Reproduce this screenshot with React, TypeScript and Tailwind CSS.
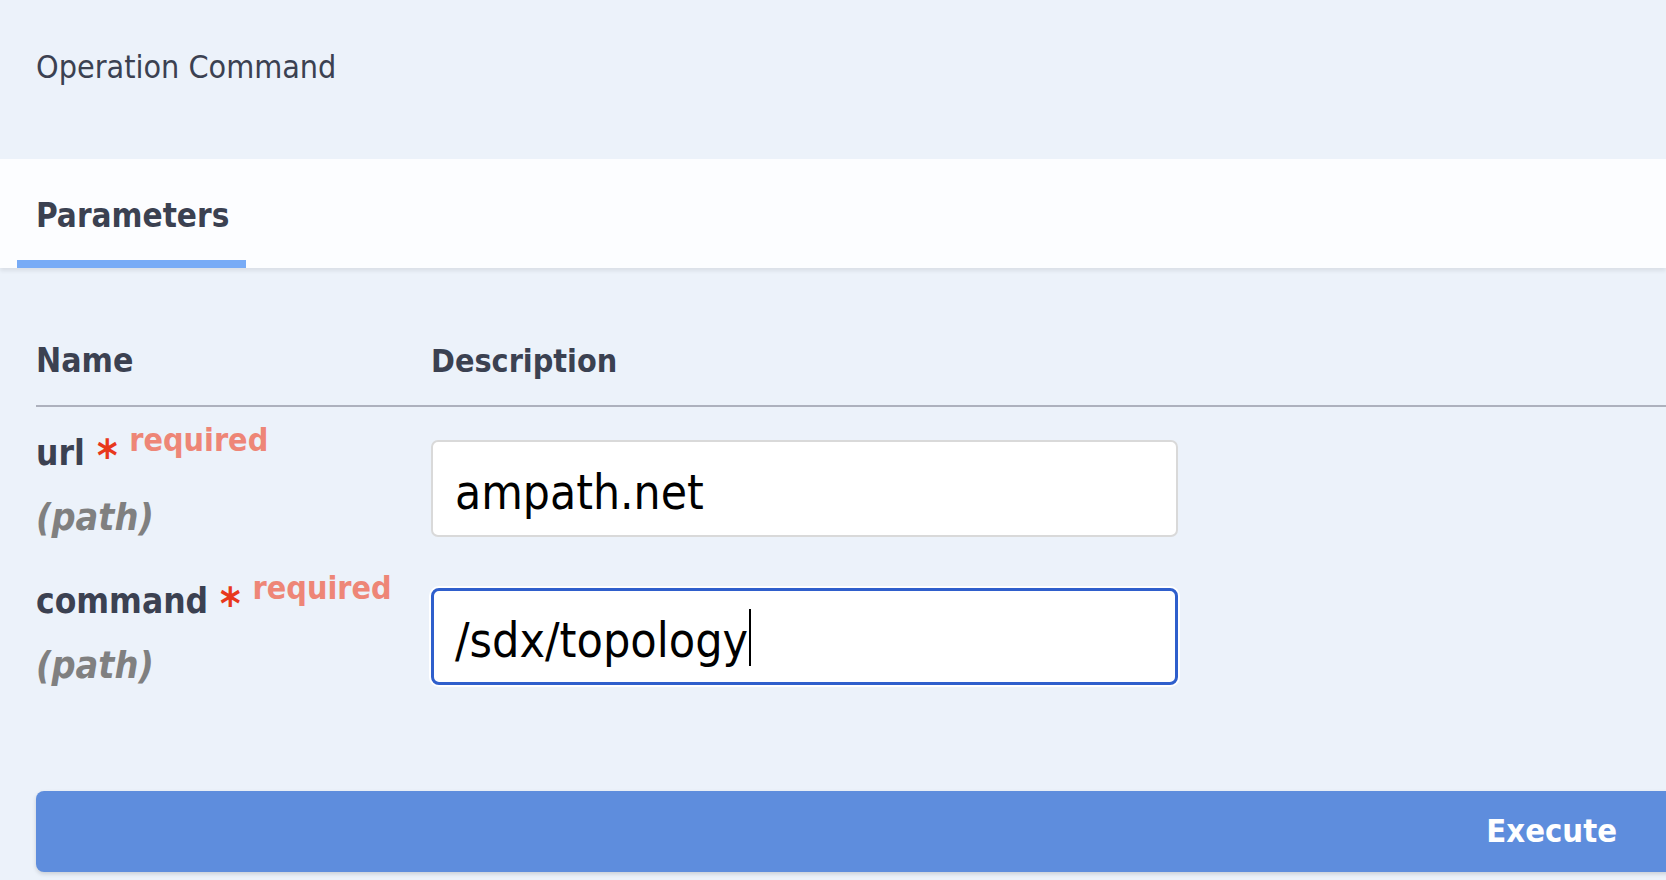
const FONT = "[font-family:'DejaVu_Sans_Condensed','DejaVu_Sans',sans-serif]";

interface ParamRowProps {
  name: string;
  location: string;
  children: React.ReactNode;
}

function ParamRow({ name, location, children }: ParamRowProps) {
  return (
    <div className="flex">
      <div className="w-[395px] shrink-0">
        <div className="whitespace-nowrap text-[35px] font-bold leading-[26px]">
          {name}
          <span className="text-[#e8381c]">&nbsp;</span>
          <span className="ml-[3px] inline-block translate-y-[3px] scale-[1.25] text-[#e8381c]">*</span>
          <span className="relative -top-[14px] ml-[14px] text-[32px] text-[#ee8677]">required</span>
        </div>
        <div className="mt-[30px] text-[37.5px] font-bold italic leading-[40px] text-[#808080]">
          ({location})
        </div>
      </div>
      <div className="w-[747px] shrink-0">{children}</div>
    </div>
  );
}

export default function App() {
  return (
    <div
      className={`min-h-screen w-full overflow-hidden bg-[#ecf2fa] text-[#3b4151] font-stretch-condensed ${FONT}`}
    >
      {/* Operation summary */}
      <div className="h-[159px] pl-9 pt-[47px] text-[32px] leading-[40px]">
        Operation Command
      </div>

      {/* Tabs */}
      <div className="relative h-[109px] bg-[#fcfdff] pt-[37px] shadow-[0_3px_4px_rgba(0,0,0,0.08)]">
        <div className="ml-[17px] w-[229px] border-b-8 border-[#78abf6] pb-[24px] pl-[19px] text-[33px] font-bold leading-[40px]">
          Parameters
        </div>
      </div>

      {/* Parameter table */}
      <div className="pl-9 pt-[73px]">
        <div className="flex border-b-2 border-[#adb1bd] pb-[24px] text-[32px] font-bold leading-[40px]">
          <div className="w-[395px] shrink-0 text-[33.5px]">Name</div>
          <div>Description</div>
        </div>

        <div className="flex flex-col gap-[51px] pt-[33px]">
          <ParamRow name="url" location="path">
            <input
              readOnly
              defaultValue="ampath.net"
              className="h-[97px] w-full rounded-[7px] border-2 border-[#d9d9d9] bg-white pl-[22px] pt-[8px] text-[47.5px] text-black outline-none"
            />
          </ParamRow>
          <ParamRow name="command" location="path">
            <div
              role="textbox"
              className="flex h-[97px] w-full items-center rounded-[8px] border-[3px] border-[#2f5fcc] bg-white pl-[21px] pt-[7px] text-[48px] leading-none text-black shadow-[0_0_0_2px_#ffffff]"
            >
              <span>/sdx/topology</span>
              <span className="mb-[6px] ml-px inline-block h-[57px] w-[2px] bg-black" />
            </div>
          </ParamRow>
        </div>

        {/* Execute */}
        <button
          type="button"
          className="mt-[106px] block h-[81px] w-[1650px] rounded-lg bg-[#5e8ddd] pr-[69px] text-right text-[32.5px] font-bold leading-[81px] text-white shadow-[0_2px_4px_rgba(0,0,0,0.15)]"
        >
          Execute
        </button>
      </div>
    </div>
  );
}
